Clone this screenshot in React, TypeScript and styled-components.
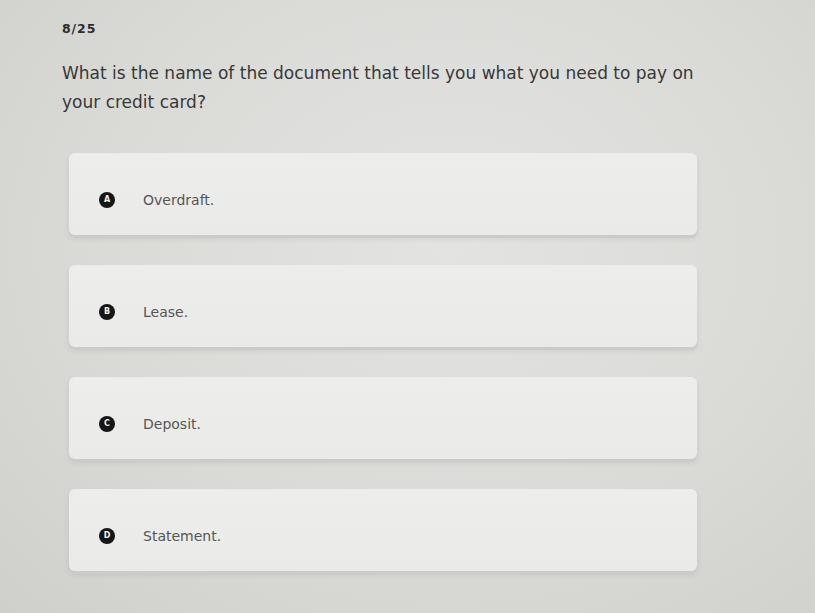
import React from "react";
import styled, { createGlobalStyle } from "styled-components";

const GlobalStyle = createGlobalStyle`
  html, body {
    margin: 0;
    padding: 0;
    height: 100%;
  }
  body {
    font-family: "DejaVu Sans", "Liberation Sans", sans-serif;
    background: #d9dad6;
  }
`;

const Screen = styled.div`
  width: 815px;
  height: 613px;
  overflow: hidden;
  box-sizing: border-box;
  padding: 21px 0 0 62px;
  background: radial-gradient(ellipse at 55% 40%, #e3e4e1 0%, #dadbd7 55%, #cfd0cc 100%);
  display: flex;
  flex-direction: column;
`;

const Counter = styled.div`
  font-weight: bold;
  font-size: 12.5px;
  letter-spacing: 0.9px;
  color: #2d2d2d;
  height: 16px;
`;

const Question = styled.h1`
  margin: 22px 0 0;
  width: 650px;
  font-size: 17px;
  font-weight: normal;
  line-height: 29px;
  color: #383838;
`;

const Options = styled.div`
  margin: 36px 0 0 7px;
  display: flex;
  flex-direction: column;
  gap: 30px;
`;

const Card = styled.div`
  width: 628px;
  height: 82px;
  box-sizing: border-box;
  padding: 11px 0 0 30px;
  display: flex;
  align-items: center;
  gap: 28px;
  background: linear-gradient(180deg, #ededeb 0%, #eaebe8 100%);
  border-radius: 6px;
  box-shadow: 0 3px 0 #cbccc8, 0 4px 6px rgba(0, 0, 0, 0.08);
`;

const Badge = styled.span`
  width: 16px;
  height: 16px;
  border-radius: 50%;
  background: #161616;
  color: #f2f2f2;
  font-size: 8px;
  font-weight: bold;
  display: flex;
  align-items: center;
  justify-content: center;
  flex-shrink: 0;
`;

const Label = styled.span`
  font-size: 14px;
  color: #555654;
`;

const options = [
  { key: "A", text: "Overdraft." },
  { key: "B", text: "Lease." },
  { key: "C", text: "Deposit." },
  { key: "D", text: "Statement." },
];

const App = () => {
  return (
    <>
      <GlobalStyle />
      <Screen>
        <Counter>8/25</Counter>
        <Question>
          What is the name of the document that tells you what you need to pay on your credit card?
        </Question>
        <Options>
          {options.map((o) => (
            <Card key={o.key}>
              <Badge>{o.key}</Badge>
              <Label>{o.text}</Label>
            </Card>
          ))}
        </Options>
      </Screen>
    </>
  );
};

export default App;
